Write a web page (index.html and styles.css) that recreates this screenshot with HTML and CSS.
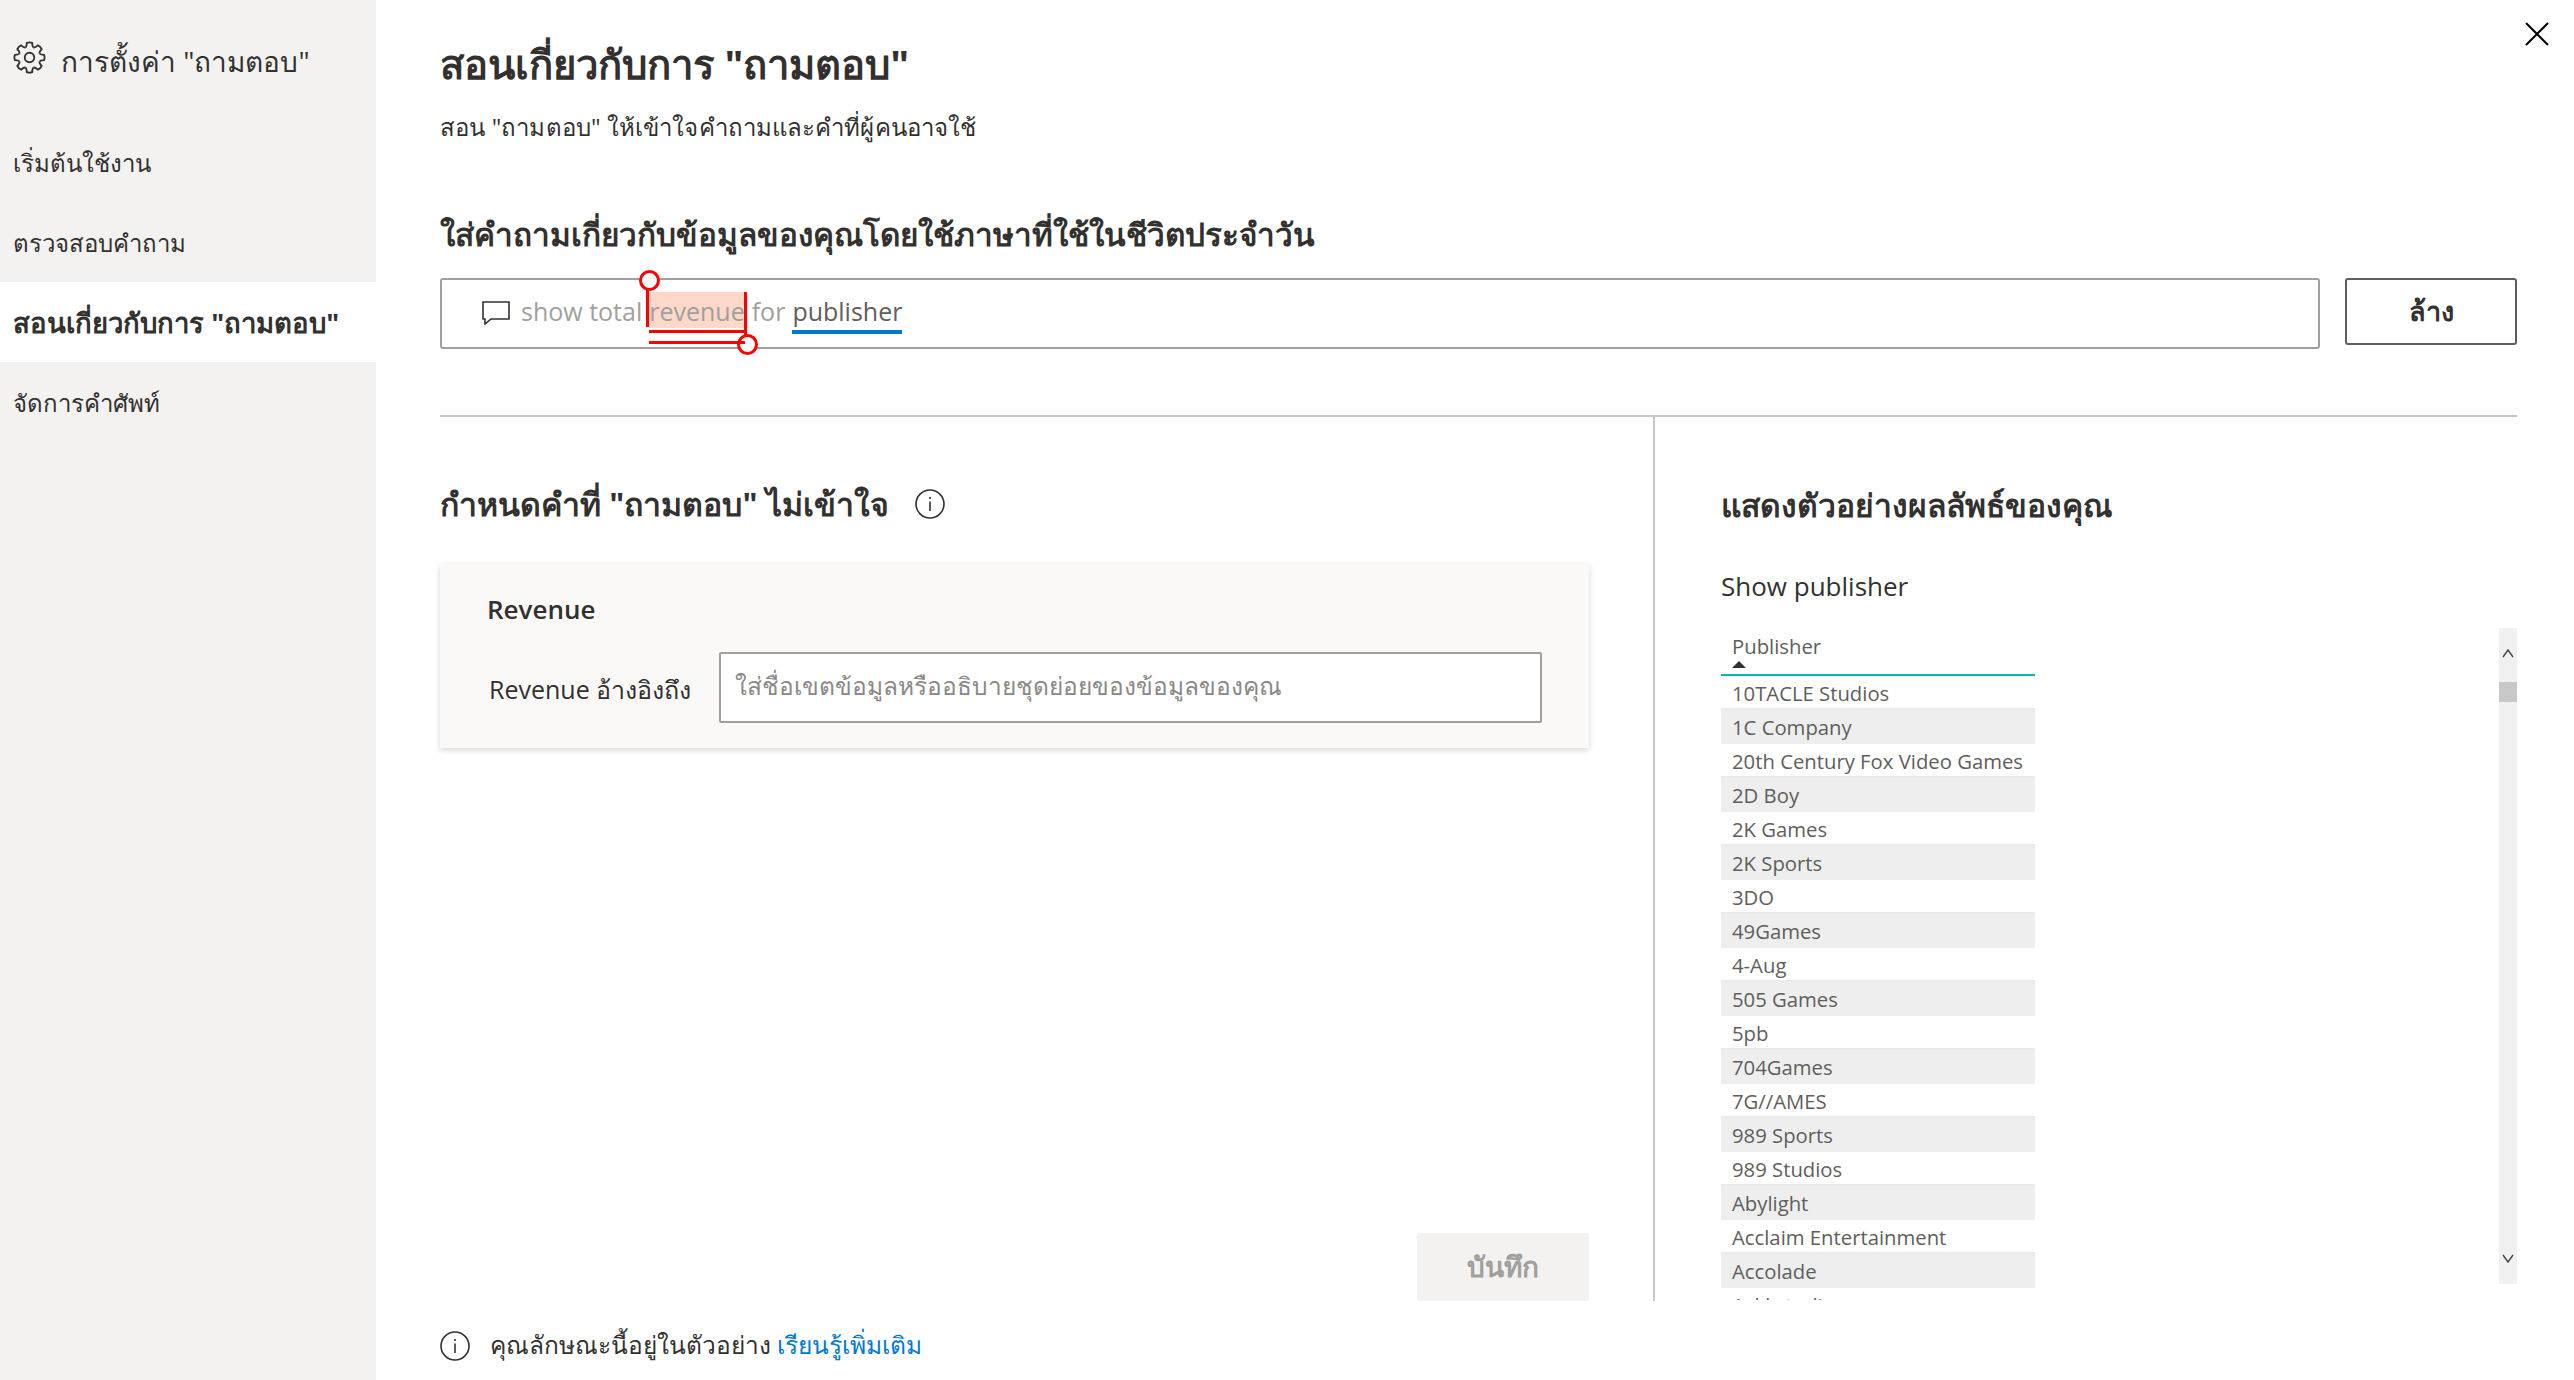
FILE: index.html
```html
<!DOCTYPE html>
<html lang="th">
<head>
    <meta charset="UTF-8">
    <title>สอนเกี่ยวกับการ "ถามตอบ"</title>
    <link rel="stylesheet" href="styles.css">
</head>
<body>
    <aside class="sidebar">
        <div class="sidebar-title">
            <svg class="gear" viewBox="0 0 32 32" fill="none" stroke="#323130" stroke-width="1.8">
                <path id="tooth" d="M11.98 6.3Q13.2 5.6 13.4 1.9Q16 .8 18.6 1.9Q18.8 5.6 20.02 6.3"/>
                <use href="#tooth" transform="rotate(45 16 16)"/>
                <use href="#tooth" transform="rotate(90 16 16)"/>
                <use href="#tooth" transform="rotate(135 16 16)"/>
                <use href="#tooth" transform="rotate(180 16 16)"/>
                <use href="#tooth" transform="rotate(225 16 16)"/>
                <use href="#tooth" transform="rotate(270 16 16)"/>
                <use href="#tooth" transform="rotate(315 16 16)"/>
                <circle cx="16" cy="16" r="4.6"/>
            </svg>
            <span>การตั้งค่า "ถามตอบ"</span>
        </div>
        <nav>
            <div class="nav-item">เริ่มต้นใช้งาน</div>
            <div class="nav-item">ตรวจสอบคำถาม</div>
            <div class="nav-item active">สอนเกี่ยวกับการ "ถามตอบ"</div>
            <div class="nav-item">จัดการคำศัพท์</div>
        </nav>
    </aside>

    <main class="main">
        <svg class="close" viewBox="0 0 24 24" stroke="#000" stroke-width="2"><path d="M1 1L23 23M23 1L1 23"/></svg>

        <h1>สอนเกี่ยวกับการ "ถามตอบ"</h1>
        <p class="subtitle">สอน "ถามตอบ" ให้เข้าใจคำถามและคำที่ผู้คนอาจใช้</p>
        <h2 class="ask-title">ใส่คำถามเกี่ยวกับข้อมูลของคุณโดยใช้ภาษาที่ใช้ในชีวิตประจำวัน</h2>

        <div class="ask-row">
            <div class="ask-box">
                <svg class="comment" viewBox="0 0 28 24" fill="none" stroke="#323130" stroke-width="1.6"><path d="M1 1H27V18H9L3 23V18H1Z"/></svg>
                <span class="q-word q-muted">show total</span>
                <span class="q-word q-muted q-revenue">revenue<i class="handle handle-start"></i><i class="handle handle-end"></i></span>
                <span class="q-word q-muted">for</span>
                <span class="q-word q-publisher">publisher</span>
            </div>
            <button class="clear-btn">ล้าง</button>
        </div>

        <div class="split">
            <section class="teach">
                <h2 class="teach-title">
                    <span>กำหนดคำที่ "ถามตอบ" ไม่เข้าใจ</span>
                    <svg class="info" viewBox="0 0 30 30" fill="none" stroke="#323130" stroke-width="1.6"><circle cx="15" cy="15" r="14"/><path d="M15 12.5V22M15 8V10"/></svg>
                </h2>
                <div class="card">
                    <div class="card-title">Revenue</div>
                    <div class="card-row">
                        <label class="card-label">Revenue อ้างอิงถึง</label>
                        <div class="card-input">ใส่ชื่อเขตข้อมูลหรืออธิบายชุดย่อยของข้อมูลของคุณ</div>
                    </div>
                </div>
                <button class="save-btn">บันทึก</button>
            </section>

            <section class="preview">
                <h2 class="preview-title">แสดงตัวอย่างผลลัพธ์ของคุณ</h2>
                <div class="show-label">Show publisher</div>
                <div class="table-wrap">
                    <div class="table">
                        <div class="table-head">
                            <div>Publisher</div>
                            <i class="sort-arrow"></i>
                        </div>
                        <div class="cell">10TACLE Studios</div>
                        <div class="cell">1C Company</div>
                        <div class="cell">20th Century Fox Video Games</div>
                        <div class="cell">2D Boy</div>
                        <div class="cell">2K Games</div>
                        <div class="cell">2K Sports</div>
                        <div class="cell">3DO</div>
                        <div class="cell">49Games</div>
                        <div class="cell">4-Aug</div>
                        <div class="cell">505 Games</div>
                        <div class="cell">5pb</div>
                        <div class="cell">704Games</div>
                        <div class="cell">7G//AMES</div>
                        <div class="cell">989 Sports</div>
                        <div class="cell">989 Studios</div>
                        <div class="cell">Abylight</div>
                        <div class="cell">Acclaim Entertainment</div>
                        <div class="cell">Accolade</div>
                        <div class="cell">Ackkstudios</div>
                    </div>
                    <div class="scrollbar">
                        <svg class="chevron" viewBox="0 0 12 12" fill="none" stroke="#444" stroke-width="1.4"><path d="M1 9L6 2L11 9"/></svg>
                        <div class="thumb"></div>
                        <svg class="chevron down" viewBox="0 0 12 12" fill="none" stroke="#444" stroke-width="1.4"><path d="M1 3L6 10L11 3"/></svg>
                    </div>
                </div>
            </section>
        </div>

        <footer class="foot">
            <svg class="info" viewBox="0 0 30 30" fill="none" stroke="#323130" stroke-width="1.6"><circle cx="15" cy="15" r="14"/><path d="M15 12.5V22M15 8V10"/></svg>
            <span>คุณลักษณะนี้อยู่ในตัวอย่าง <a href="#">เรียนรู้เพิ่มเติม</a></span>
        </footer>
    </main>
</body>
</html>
```

FILE: styles.css
```css
* {
    box-sizing: border-box;
}

body {
    margin: 0;
    height: 1380px;
    overflow: hidden;
    display: flex;
    background-color: #ffffff;
    color: #323130;
    font-family: "Open Sans", "Noto Sans", sans-serif;
}

.sidebar {
    width: 376px;
    flex-shrink: 0;
    background-color: #f3f2f1;
}

.sidebar-title {
    height: 122px;
    padding: 0 0 7px 13px;
    display: flex;
    align-items: center;
    gap: 15px;
    font-size: 28px;
}

.sidebar-title span {
    padding-top: 9px;
}

.gear {
    width: 33px;
    height: 33px;
}

.nav-item {
    height: 80px;
    padding: 2px 0 0 13px;
    display: flex;
    align-items: center;
    font-size: 24px;
}

.nav-item.active {
    background-color: #ffffff;
    font-size: 27.5px;
    font-weight: 700;
}

.main {
    position: relative;
    flex: 1;
    padding: 0 57px 0 64px;
}

.close {
    position: absolute;
    top: 22px;
    right: 25px;
    width: 24px;
    height: 24px;
}

h1 {
    margin: 0;
    padding-top: 38px;
    height: 90px;
    line-height: 52px;
    font-size: 40px;
    font-weight: 700;
}

.subtitle {
    margin: 17px 0 0;
    line-height: 40px;
    font-size: 24px;
    letter-spacing: 0.1px;
}

h2 {
    margin: 0;
    font-size: 32px;
    font-weight: 700;
}

.ask-title {
    margin-top: 64px;
    line-height: 46px;
    font-size: 31.5px;
}

.ask-row {
    margin-top: 21px;
    display: flex;
    align-items: flex-start;
    gap: 25px;
}

.ask-box {
    flex: 1;
    height: 71px;
    padding: 0 0 7px 40px;
    display: flex;
    align-items: center;
    gap: 7px;
    border: 2px solid #a19f9d;
    border-radius: 3px;
    font-size: 25px;
}

.comment {
    width: 28px;
    height: 24px;
    margin: 5px 4px 0 0;
}

/* box stays 36px, the taller line only drops the text a little */
.q-word {
    height: 36px;
    line-height: 38px;
}

.q-muted {
    color: #a19f9d;
}

.q-revenue {
    position: relative;
    background-color: #fdd7c8;
}

/* double underline below the selected word */
.q-revenue::after {
    content: "";
    position: absolute;
    left: 0;
    right: 0;
    top: 38px;
    height: 8px;
    border-top: 3px solid #ff0000;
    border-bottom: 3px solid #ff0000;
}

.handle {
    position: absolute;
    width: 3px;
    background-color: #ff0000;
}

.handle::after {
    content: "";
    position: absolute;
    left: -6px;
    width: 15px;
    height: 15px;
    background-color: #ffffff;
    border: 3px solid #ff0000;
    border-radius: 50%;
}

.handle-start {
    left: -3px;
    top: -5px;
    height: 40px;
}

.handle-start::after {
    top: -17px;
    left: -7px;
}

.handle-end {
    right: -2px;
    top: 0;
    height: 53px;
}

.handle-end::after {
    bottom: -10px;
    left: -7px;
}

.q-publisher {
    position: relative;
    color: #605e5c;
}

.q-publisher::after {
    content: "";
    position: absolute;
    left: 0;
    right: 0;
    top: 38px;
    height: 4px;
    background-color: #0078d4;
}

.clear-btn {
    width: 172px;
    height: 67px;
    background-color: #ffffff;
    color: #323130;
    border: 2px solid #605e5c;
    border-radius: 3px;
    font-family: inherit;
    font-size: 27px;
    font-weight: 700;
}

.split {
    margin-top: 66px;
    height: 886px;
    display: flex;
    border-top: 2px solid #c8c6c4;
}

.teach {
    width: 1215px;
    padding-right: 64px;
    border-right: 2px solid #c8c6c4;
    display: flex;
    flex-direction: column;
}

.teach-title {
    margin-top: 64px;
    display: flex;
    align-items: center;
    gap: 26px;
    line-height: 46px;
}

.info {
    width: 30px;
    height: 30px;
    flex-shrink: 0;
}

.card {
    margin-top: 37px;
    height: 184px;
    padding: 23px 47px 0 47px;
    background-color: #faf9f8;
    box-shadow: 0 2px 6px rgba(0, 0, 0, 0.16);
}

.card-title {
    line-height: 44px;
    font-size: 26px;
    font-weight: 600;
}

.card-row {
    margin-top: 21px;
    display: flex;
    align-items: center;
    gap: 24px;
}

.card-label {
    width: 208px;
    padding: 4px 0 0 2px;
    white-space: nowrap;
    font-size: 25px;
}

.card-input {
    flex: 1;
    height: 71px;
    padding: 0 0 3px 14px;
    display: flex;
    align-items: center;
    background-color: #ffffff;
    border: 2px solid #a19f9d;
    border-radius: 2px;
    color: #8a8886;
    font-size: 24.5px;
}

.save-btn {
    margin-top: auto;
    align-self: flex-end;
    width: 172px;
    height: 68px;
    background-color: #f3f2f1;
    color: #a19f9d;
    border: none;
    border-radius: 2px;
    font-family: inherit;
    font-size: 28px;
    font-weight: 700;
}

.preview {
    flex: 1;
    padding-left: 66px;
    min-width: 0;
}

.preview-title {
    margin-top: 65px;
    line-height: 46px;
    font-size: 31.8px;
}

.show-label {
    margin-top: 36px;
    line-height: 44px;
    font-size: 26px;
}

.table-wrap {
    margin-top: 20px;
    display: flex;
    justify-content: space-between;
    align-items: flex-start;
}

.table {
    width: 314px;
    height: 672px;
    overflow: hidden;
    font-size: 20.3px;
    color: #605e5c;
}

.table-head {
    height: 48px;
    padding: 2px 0 0 11px;
    line-height: 32px;
    border-bottom: 2px solid #01b8aa;
    position: relative;
}

.sort-arrow {
    position: absolute;
    left: 11px;
    top: 33px;
    border-left: 7px solid transparent;
    border-right: 7px solid transparent;
    border-bottom: 7px solid #323130;
}

.cell {
    height: 34px;
    line-height: 34px;
    padding-left: 11px;
    white-space: nowrap;
}

.cell:nth-child(odd) {
    background-color: #eeeeee;
    box-shadow: 0 -2px 0 #eaeaea;
    position: relative;
}

.scrollbar {
    position: relative;
    width: 18px;
    height: 656px;
    padding-top: 20px;
    background-color: #f0f0f0;
}

.chevron {
    display: block;
    width: 12px;
    height: 12px;
    margin-left: 3px;
}

.chevron.down {
    position: absolute;
    left: 0;
    bottom: 20px;
}

.thumb {
    height: 20px;
    margin-top: 22px;
    background-color: #c8c8c8;
}

.foot {
    margin-top: 25px;
    display: flex;
    align-items: center;
    gap: 20px;
    font-size: 24.5px;
}

.foot a {
    color: #0078d4;
    text-decoration: none;
}
```
